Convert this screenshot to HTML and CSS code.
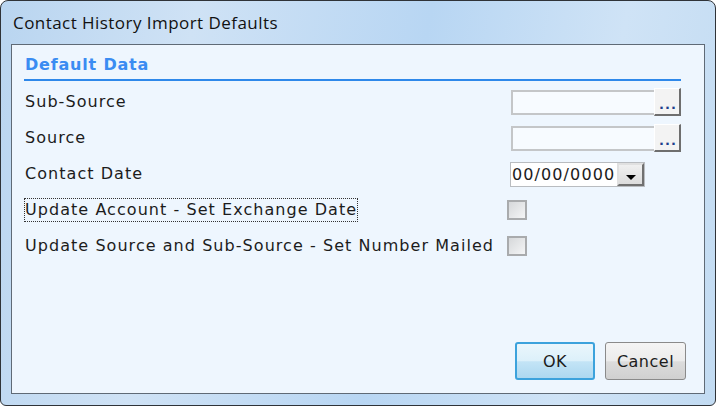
FILE: index.html
```html
<!DOCTYPE html>
<html lang="en">
<head>
    <meta charset="UTF-8">
    <title>Contact History Import Defaults</title>
    <link rel="stylesheet" href="styles.css">
</head>
<body>
  <div class="window">
    <div class="title-bar">Contact History Import Defaults</div>

    <div class="client">
      <div class="group-title">Default Data</div>

      <div class="form-row">
        <span class="label">Sub-Source</span>
        <div class="lookup">
          <div class="text-box"></div>
          <button class="browse-button">...</button>
        </div>
      </div>

      <div class="form-row">
        <span class="label">Source</span>
        <div class="lookup">
          <div class="text-box"></div>
          <button class="browse-button">...</button>
        </div>
      </div>

      <div class="form-row">
        <span class="label">Contact Date</span>
        <div class="date-box">
          <span class="date-text">00/00/0000</span>
          <span class="drop-button"><span class="arrow"></span></span>
        </div>
      </div>

      <div class="form-row">
        <span class="label focused">Update Account - Set Exchange Date</span>
        <span class="check-box"></span>
      </div>

      <div class="form-row">
        <span class="label">Update Source and Sub-Source - Set Number Mailed</span>
        <span class="check-box"></span>
      </div>

      <div class="spacer"></div>

      <div class="dialog-buttons">
        <button class="dialog-button default-button">OK</button>
        <button class="dialog-button">Cancel</button>
      </div>
    </div>
  </div>
</body>
</html>
```

FILE: styles.css
```css
body {
    margin: 0px;
    background-color: #ffffff;
}

.window {
    width: 716px;
    height: 406px;
    box-sizing: border-box;
    border: 1px solid #2f3338;
    border-radius: 8px 8px 6px 6px;
    background: linear-gradient(100deg, #b9d5f0 0%, #cfe2f5 25%, #b8d6f3 55%, #cfe3f6 80%, #c2dbf2 100%);
    display: flex;
    flex-direction: column;
    overflow: hidden;
}

.title-bar {
    height: 43px;
    padding-left: 12px;
    padding-top: 5px;
    box-sizing: border-box;
    font-family: "Open Sans", sans-serif;
    font-size: 17px;
    letter-spacing: 0.45px;
    line-height: 34px;
    color: #111111;
}

.client {
    flex: 1;
    margin: 0px 10px 11px 10px;
    border: 1px solid #5f6a76;
    background-color: #eef6fe;
    padding: 10px 23px 13px 12px;
    display: flex;
    flex-direction: column;
    font-family: "DejaVu Sans", Verdana, sans-serif;
    font-size: 16px;
    letter-spacing: 1.05px;
    color: #1c1c1c;
}

.group-title {
    font-weight: bold;
    letter-spacing: 0.8px;
    color: #3a8cf2;
    border-bottom: 2px solid #2e88ea;
    padding-left: 1px;
    padding-bottom: 4px;
    margin-bottom: 3px;
    line-height: 20px;
}

.form-row {
    height: 36px;
    display: flex;
    align-items: center;
    justify-content: space-between;
}

.label {
    padding: 1px 0px 2px 0px;
    border: 1px solid transparent;
}

.focused {
    border: 1px dotted #333333;
}

.lookup {
    display: flex;
    align-items: center;
}

.text-box {
    width: 141px;
    height: 21px;
    border: 2px solid #c4c6c8;
    border-right: 0px;
    background-color: #f7fbff;
}

.browse-button {
    width: 27px;
    height: 28px;
    padding: 0px 0px 0px 2px;
    margin: 0px;
    border: 1px solid #ffffff;
    border-right: 2px solid #6e6e6e;
    border-bottom: 2px solid #6e6e6e;
    background-color: #f3f3f3;
    font-family: "DejaVu Sans", sans-serif;
    font-weight: bold;
    font-size: 13px;
    color: #1a3f8c;
    line-height: 32px;
    letter-spacing: 1px;
}

.date-box {
    width: 135px;
    height: 25px;
    box-sizing: border-box;
    border: 1px solid #b9bcc0;
    background-color: #ffffff;
    display: flex;
    align-items: center;
    margin-right: 36px;
}

.date-text {
    flex: 1;
    padding-left: 1px;
    letter-spacing: 1.1px;
    white-space: nowrap;
    overflow: hidden;
}

.drop-button {
    width: 27px;
    height: 23px;
    flex-shrink: 0;
    box-sizing: border-box;
    border: 2px solid #707070;
    border-top-color: #e0e0e0;
    border-left-color: #e0e0e0;
    background: linear-gradient(#f0f0f0, #dcdcdc);
    display: flex;
    align-items: flex-end;
    justify-content: center;
    padding-bottom: 4px;
}

.arrow {
    width: 0px;
    height: 0px;
    border-left: 5px solid transparent;
    border-right: 5px solid transparent;
    border-top: 5px solid #000000;
}

.check-box {
    width: 20px;
    height: 20px;
    flex-shrink: 0;
    box-sizing: border-box;
    border: 2px solid #a9abad;
    background: linear-gradient(135deg, #d6d8da, #f4f5f6);
    margin-right: 154px;
}

.spacer {
    flex: 1;
}

.dialog-buttons {
    display: flex;
    justify-content: flex-end;
    gap: 10px;
    margin-right: -5px;
}

.dialog-button {
    width: 81px;
    height: 38px;
    border: 1px solid #8a8a8a;
    border-radius: 3px;
    background: linear-gradient(#f4f4f4 0%, #ebebeb 50%, #dcdcdc 52%, #d0d0d0 100%);
    font-family: "DejaVu Sans", sans-serif;
    font-size: 16px;
    letter-spacing: 0.5px;
    color: #1c1c1c;
    padding: 0px;
}

.default-button {
    width: 80px;
    border: 2px solid #3ca2dc;
    background: linear-gradient(#eaf6fc 0%, #dcf0fa 50%, #c3e4f6 52%, #add8f0 100%);
}
```
